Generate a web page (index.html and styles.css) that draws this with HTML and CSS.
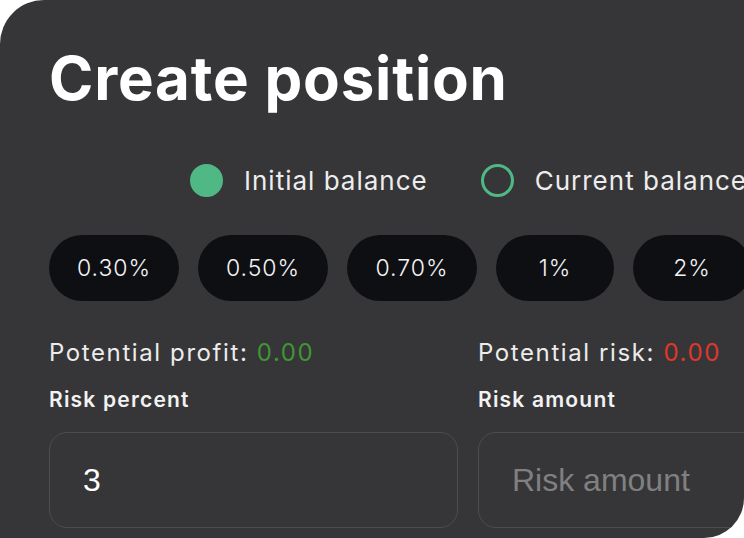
FILE: index.html
```html
<!DOCTYPE html>
<html lang="en">
<head>
    <meta charset="UTF-8">
    <meta name="viewport" content="width=device-width, initial-scale=1.0">
    <title>Create position</title>
    <link rel="stylesheet" href="styles.css">
</head>
<body>

    <div class="position-card">
        <h1>Create position</h1>

        <div class="balance-switch">
            <label class="radio checked">
                <span class="dot"></span>
                Initial balance
            </label>
            <label class="radio">
                <span class="dot"></span>
                Current balance
            </label>
        </div>

        <div class="presets">
            <button class="chip">0.30%</button>
            <button class="chip">0.50%</button>
            <button class="chip">0.70%</button>
            <button class="chip small">1%</button>
            <button class="chip small">2%</button>
        </div>

        <div class="fields">
            <div class="field">
                <div class="stat">Potential profit: <span class="profit">0.00</span></div>
                <label for="riskPercent">Risk percent</label>
                <input type="text" id="riskPercent" value="3">
            </div>
            <div class="field">
                <div class="stat">Potential risk: <span class="risk">0.00</span></div>
                <label for="riskAmount">Risk amount</label>
                <input type="text" id="riskAmount" placeholder="Risk amount">
            </div>
        </div>
    </div>

</body>
</html>
```

FILE: styles.css
```css
/* Basic reset */
* {
    margin: 0;
    padding: 0;
    box-sizing: border-box;
}

body {
    background: #fff;
    font-family: 'Inter', 'Open Sans', sans-serif;
    overflow: hidden;
}

.position-card {
    width: 744px;
    height: 538px;
    background-color: #363638;
    border-radius: 44px 0 40px 0;
    overflow: hidden;
    padding-left: 49px;
}

.position-card h1 {
    margin-top: 43px;
    line-height: 70px;
    font-size: 60px;
    font-weight: 700;
    color: #fff;
    letter-spacing: 0.8px;
}

/* Balance radios */
.balance-switch {
    display: flex;
    gap: 53px;
    margin-top: 47px;
    margin-left: 141px;
    height: 40px;
    align-items: center;
    white-space: nowrap;
}

.radio {
    display: flex;
    align-items: center;
    gap: 21px;
    font-size: 26px;
    letter-spacing: 1px;
    color: #ededed;
}

.radio .dot {
    width: 33px;
    height: 33px;
    border-radius: 50%;
    border: 3px solid #4fb885;
    flex-shrink: 0;
}

.radio.checked .dot {
    background-color: #4fb885;
}

/* Preset chips */
.presets {
    display: flex;
    gap: 19px;
    margin-top: 35px;
}

.chip {
    flex-shrink: 0;
    width: 130px;
    height: 66px;
    border: none;
    border-radius: 33px;
    background-color: #0e0f13;
    color: #f4f4f4;
    font-family: inherit;
    font-size: 23px;
    font-weight: 300;
    letter-spacing: 1px;
}

.chip.small {
    width: 118px;
}

/* Risk fields */
.fields {
    display: grid;
    grid-template-columns: 409px 409px;
    column-gap: 20px;
    margin-top: 37px;
}

.field {
    display: flex;
    flex-direction: column;
}

.stat {
    line-height: 30px;
    font-size: 24px;
    font-weight: 400;
    letter-spacing: 1.6px;
    color: #ececec;
}

.stat .profit {
    color: #3f9534;
}

.stat .risk {
    color: #e0362b;
}

.field label {
    margin-top: 17px;
    line-height: 30px;
    font-size: 21px;
    font-weight: 600;
    letter-spacing: 1.2px;
    color: #f2f2f2;
}

.field input {
    margin-top: 17px;
    height: 96px;
    padding: 0 33px;
    background: transparent;
    border: 1px solid #4d4d4f;
    border-radius: 18px;
    font-family: 'Liberation Sans', Arial, sans-serif;
    font-size: 32px;
    color: #fff;
    outline: none;
}

.field input::placeholder {
    color: #808080;
}
```
